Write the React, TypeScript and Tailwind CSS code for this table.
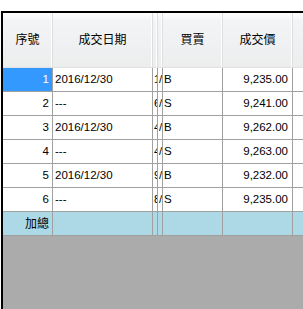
import React from "react";

type Trade = {
  no: number;
  date: string;
  c3: string;
  c4: string;
  side: string;
  price: string;
};

const trades: Trade[] = [
  { no: 1, date: "2016/12/30", c3: "1", c4: "/", side: "B", price: "9,235.00" },
  { no: 2, date: "---", c3: "6", c4: "/", side: "S", price: "9,241.00" },
  { no: 3, date: "2016/12/30", c3: "4", c4: "/", side: "B", price: "9,262.00" },
  { no: 4, date: "---", c3: "4", c4: "/", side: "S", price: "9,263.00" },
  { no: 5, date: "2016/12/30", c3: "9", c4: "/", side: "B", price: "9,232.00" },
  { no: 6, date: "---", c3: "8", c4: "/", side: "S", price: "9,235.00" },
];

const font = {
  fontFamily: '"Liberation Sans", "Noto Sans CJK TC", sans-serif',
};

// widths line up header and body columns
const cols = ["w-[50px]", "w-[100px]", "w-[5px]", "w-[5px]", "w-[60px]", "w-[70px]"];

const HeaderCell: React.FC<{ w: string; children?: React.ReactNode }> = ({ w, children }) => (
  <div
    className={`${w} shrink-0 flex items-center justify-center border-r border-r-[#dedede] shadow-[inset_-1px_0_0_#ffffff] text-[12px] text-black`}
  >
    {children}
  </div>
);

export default function App() {
  return (
    <div className="w-[303px] h-[309px] overflow-hidden bg-white pt-[11px]" style={font}>
      <div className="ml-px h-full border-t-2 border-l-2 border-black bg-[#ababab] flex flex-col">
        {/* header */}
        <div className="flex h-[55px] shrink-0 bg-gradient-to-b from-white via-[#f3f4f6] via-[15%] to-[#eceded] border-b border-[#e2e2e2]">
          <HeaderCell w={cols[0]}>序號</HeaderCell>
          <HeaderCell w={cols[1]}>成交日期</HeaderCell>
          <HeaderCell w={cols[2]} />
          <HeaderCell w={cols[3]} />
          <HeaderCell w={cols[4]}>買賣</HeaderCell>
          <HeaderCell w={cols[5]}>成交價</HeaderCell>
          <div className="flex-1" />
        </div>

        {/* rows */}
        {trades.map((t) => (
          <div key={t.no} className="flex h-[24px] shrink-0 bg-white border-b border-[#a0a0a0] text-[11.5px] text-black">
            <div
              className={`${cols[0]} shrink-0 flex items-center justify-end pr-[3px] border-r border-[#a0a0a0] ${
                t.no === 1 ? "bg-[#3399ff] text-white" : ""
              }`}
            >
              {t.no}
            </div>
            <div className={`${cols[1]} shrink-0 flex items-center pl-[2px] border-r border-[#a0a0a0]`}>
              {t.date}
            </div>
            <div className={`${cols[2]} shrink-0 flex items-center overflow-hidden border-r border-[#a0a0a0]`}>
              <span className="pl-px">{t.c3}</span>
            </div>
            <div className={`${cols[3]} shrink-0 flex items-center overflow-hidden border-r border-[#a0a0a0]`}>
              <span className="pl-px">{t.c4}</span>
            </div>
            <div className={`${cols[4]} shrink-0 flex items-center pl-[1px] border-r border-[#a0a0a0]`}>
              {t.side}
            </div>
            <div className={`${cols[5]} shrink-0 flex items-center justify-end pr-[4px] border-r border-[#a0a0a0]`}>
              {t.price}
            </div>
            <div className="flex-1" />
          </div>
        ))}

        {/* total row */}
        <div className="flex h-[24px] shrink-0 bg-[#add8e6] border-b border-[#a0a0a0] text-[12px] text-black">
          <div className={`${cols[0]} shrink-0 flex items-center justify-end pr-[3px] border-r border-[#a0a0a0]`}>
            加總
          </div>
          <div className={`${cols[1]} shrink-0 border-r border-[#a0a0a0]`} />
          <div className={`${cols[2]} shrink-0 border-r border-[#a0a0a0]`} />
          <div className={`${cols[3]} shrink-0 border-r border-[#a0a0a0]`} />
          <div className={`${cols[4]} shrink-0 border-r border-[#a0a0a0]`} />
          <div className={`${cols[5]} shrink-0 border-r border-[#a0a0a0]`} />
          <div className="flex-1" />
        </div>
      </div>
    </div>
  );
}
